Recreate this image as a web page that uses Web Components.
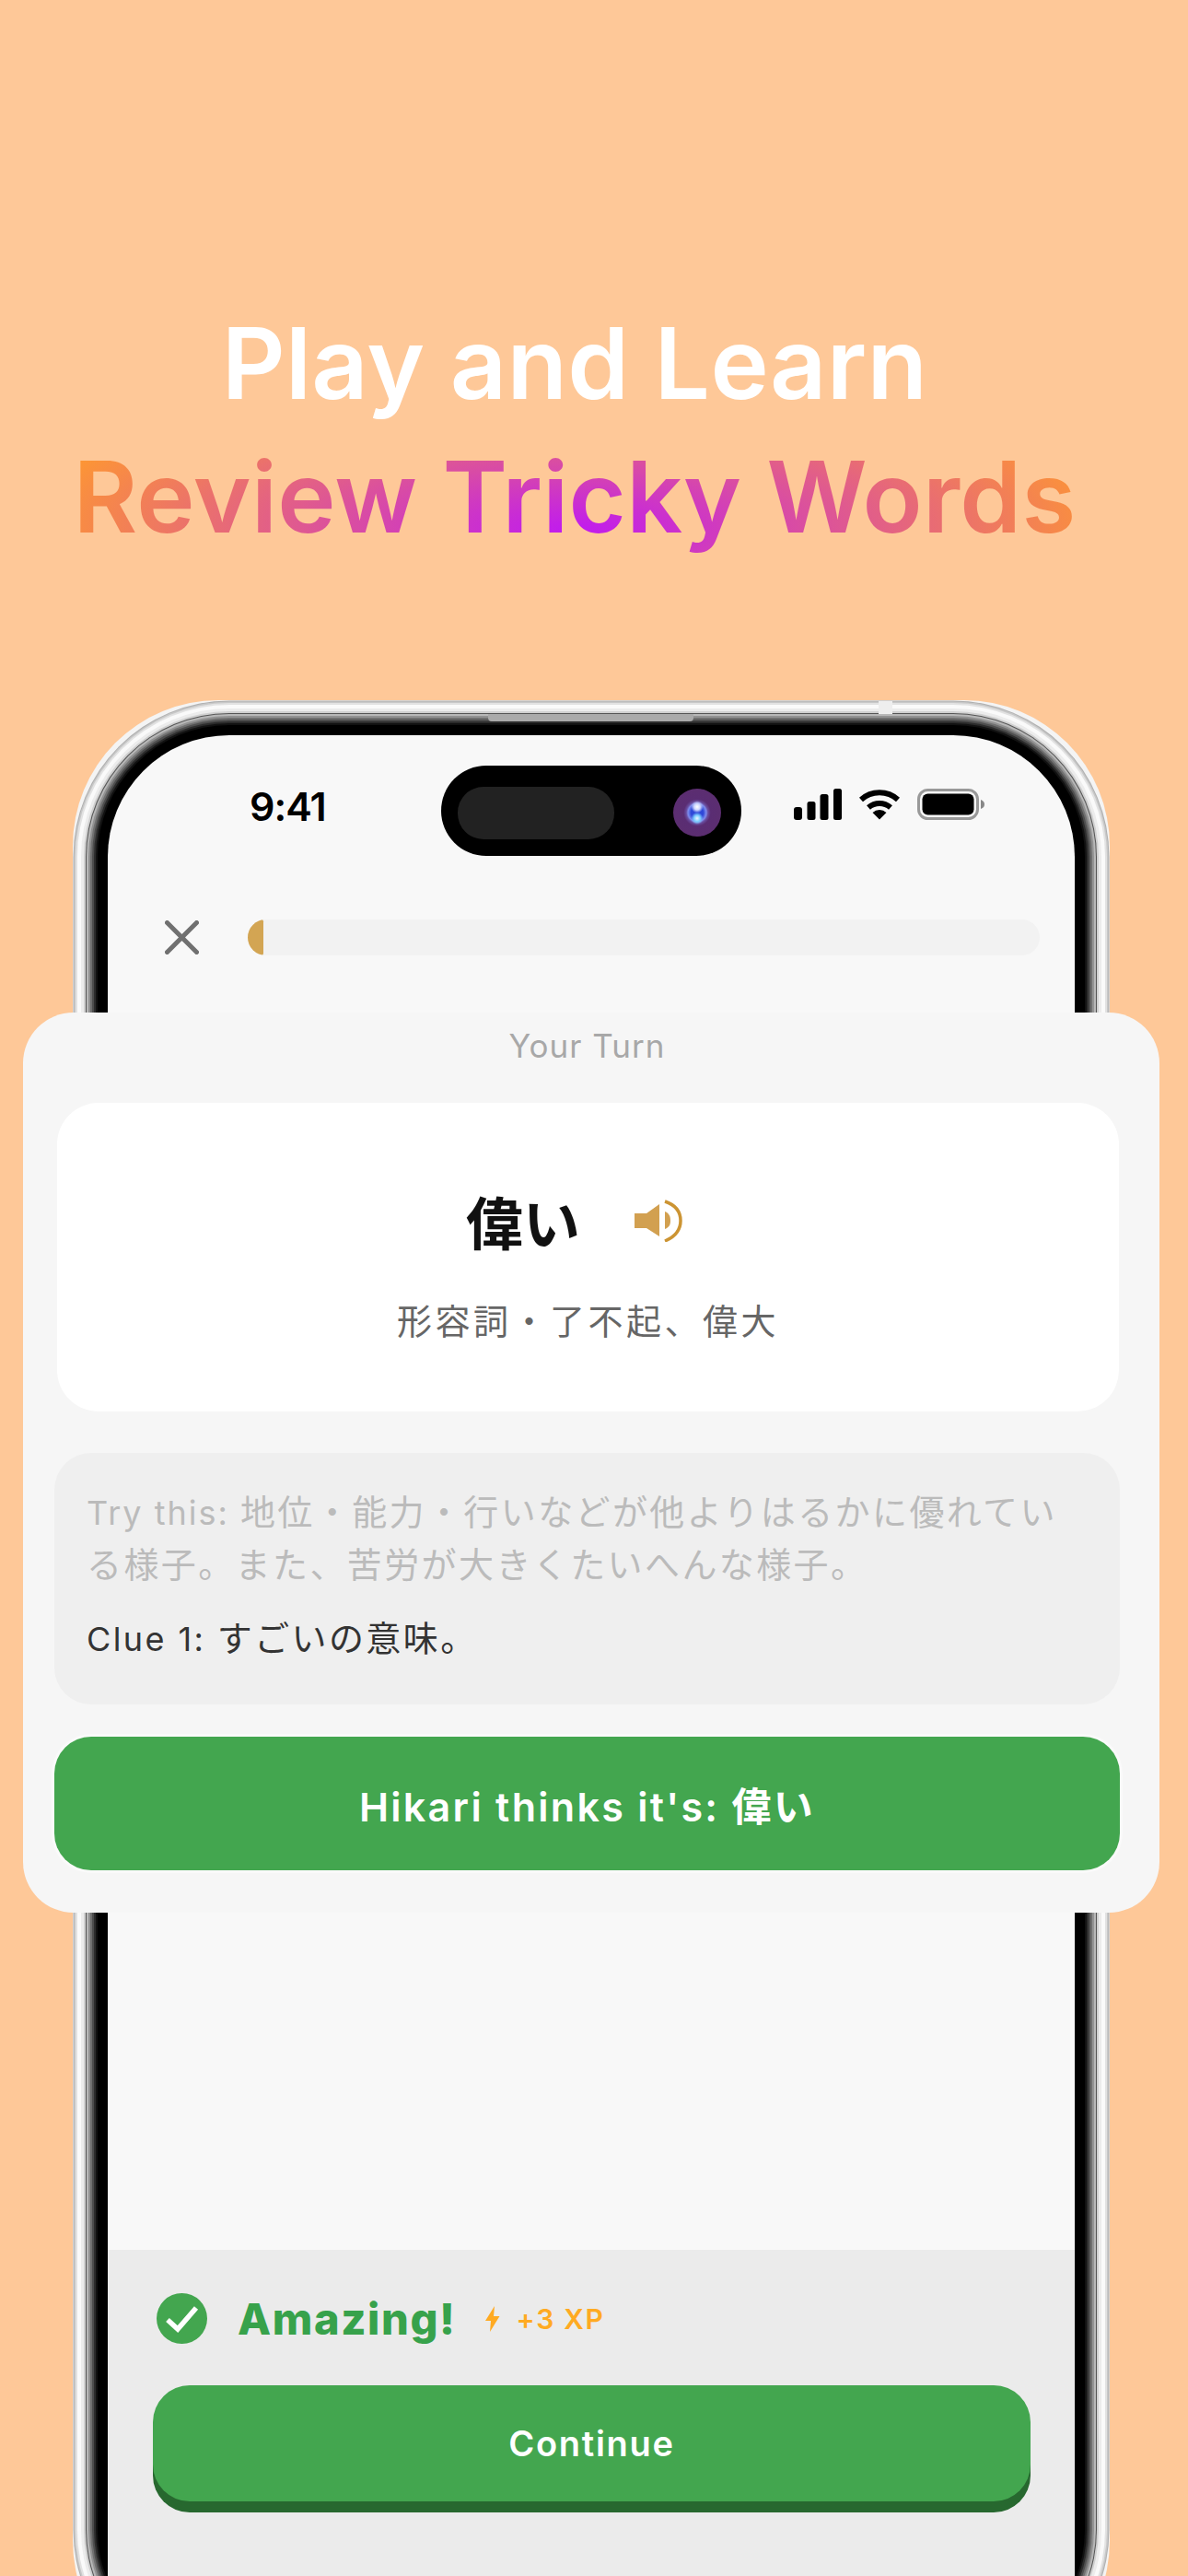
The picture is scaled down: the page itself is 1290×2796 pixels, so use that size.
<!DOCTYPE html>
<html lang="ja">
  <head>
    <meta charset="UTF-8" />
    <title>Play and Learn</title>
    <style>
      html, body { margin: 0; background: #fec898; overflow: hidden; }
    </style>
  </head>
  <body>
    <template id="store-poster">
      <style>
        :host {
          display: block; position: relative; width: 1290px; height: 2796px; overflow: hidden;
          background: #fec898; font-family: Inter, "Noto Sans CJK JP", sans-serif;
        }
      </style>
      <slot></slot>
    </template>

    <template id="promo-title">
      <style>
        :host { display: block; height: 760px; box-sizing: border-box; padding: 322px 42px 0 0; text-align: center; font-size: 107px; font-weight: 600; line-height: 145px; letter-spacing: 0.3px; }
        .plain { color: #fff; }
        .fancy {
          display: block; width: fit-content; margin: 0 auto; color: transparent;
          background: radial-gradient(ellipse 56% 130% at 50% 75%, #c01af0 0, #ff9a2e 100%);
          -webkit-background-clip: text; background-clip: text;
        }
      </style>
      <div class="plain"><slot name="plain"></slot></div>
      <div class="fancy"><slot name="fancy"></slot></div>
    </template>

    <template id="phone-frame">
      <style>
        :host { display: block; position: relative; width: 1050px; margin: 38px 0 0 117px; }
        :host::before { content: ""; position: absolute; inset: -38px; border-radius: 158px; background: #f4f4f4; }
        .screen {
          position: relative; display: flex; flex-direction: column; height: 2080px;
          background: #f8f8f8; border-radius: 132px;
          box-shadow: 0 0 0 11px #000, 0 0 0 13px #111, 0 0 0 15px #2c2c2c, 0 0 0 17px #4e4e4e, 0 0 0 19px #707070,
            0 0 0 21px #939393, 0 0 0 23px #b8b8b8, 0 0 0 24px #555, 0 0 0 26px #d0d0d0, 0 0 0 29px #ececec,
            0 0 0 33px #fafafa, 0 0 0 35px #e2e2e2, 0 0 0 36.5px #c8c8c8, 0 0 0 37.5px #b0b0b0;
        }
        .slit { position: absolute; top: -23px; left: 413px; width: 223px; height: 8px; background: #aaa; border-radius: 0 0 4px 4px; }
        .band { position: absolute; top: -37px; left: 837px; width: 15px; height: 14px; background: #eee; }
      </style>
      <div class="screen">
        <div class="slit"></div>
        <div class="band"></div>
        <slot></slot>
      </div>
    </template>

    <template id="status-bar">
      <style>
        :host { display: grid; grid-template-columns: 362px 326px 1fr; align-items: start; padding-top: 33px; height: 98px; color: #000; }
        .time { padding: 18px 0 0 154px; font-size: 43px; font-weight: 600; line-height: 52px; letter-spacing: -1px; }
        .island { position: relative; height: 98px; border-radius: 49px; background: #000; }
        .pill { position: absolute; left: 18px; top: 23px; width: 170px; height: 57px; border-radius: 28px; background: #222; }
        .lens {
          position: absolute; left: 252px; top: 25px; width: 52px; height: 52px; border-radius: 50%;
          background:
            radial-gradient(circle at 50% 38%, #fff 0, #cdd6ff 8%, transparent 16%),
            radial-gradient(circle at 50% 62%, #eef2ff 0, #7fd0ff 8%, transparent 16%),
            radial-gradient(circle, #2f48d8 0, #2f48d8 18%, #7f8cec 27%, #6a4ea0 32%, #5a2d73 40%, #5c2e70 78%, #3c2148 100%);
        }
        .icons { display: flex; align-items: flex-start; gap: 18px; padding: 25px 0 0 57px; }
        svg { display: block; }
      </style>
      <div class="time"><slot></slot></div>
      <div class="island"><div class="pill"></div><div class="lens"></div></div>
      <div class="icons">
        <svg width="52" height="34" viewBox="0 0 52 34">
          <rect x="0" y="20" width="9" height="14" rx="3" />
          <rect x="14.5" y="14" width="9" height="20" rx="2.5" />
          <rect x="28.5" y="6" width="9" height="28" rx="2.5" />
          <rect x="43" y="0" width="9" height="34" rx="2.5" />
        </svg>
        <svg width="46" height="34" viewBox="0 0 46 34">
          <path d="M3 12 A30 30 0 0 1 43 12 M11 20.5 A18.5 18.5 0 0 1 35 20.5" fill="none" stroke="#000" stroke-width="6" />
          <path d="M15.5 26 A11 11 0 0 1 30.5 26 L23 33.5 Z" />
        </svg>
        <svg width="74" height="34" viewBox="0 0 74 34">
          <rect x="1.5" y="1.5" width="64" height="31" rx="10" fill="none" stroke="#999" stroke-width="3" />
          <rect x="5.5" y="5.5" width="56" height="23" rx="6" />
          <path d="M69 12 C72 13 73 15 73 17 C73 19 72 21 69 22 Z" fill="#888" />
        </svg>
      </div>
    </template>

    <template id="lesson-progress">
      <style>
        :host { display: flex; align-items: center; gap: 53px; margin-top: 69px; padding: 0 38px 0 62px; height: 39px; }
        svg { flex: none; display: block; }
        .track { flex: 1; height: 39px; border-radius: 20px; background: #f2f2f2; overflow: hidden; }
        .fill { width: 17px; height: 100%; background: #d3a553; border-radius: 20px 3px 3px 20px; }
      </style>
      <svg width="37" height="37" viewBox="0 0 37 37">
        <path d="M2.5 2.5 L34.5 34.5 M34.5 2.5 L2.5 34.5" stroke="#707070" stroke-width="5" stroke-linecap="round" />
      </svg>
      <div class="track"><div class="fill"></div></div>
    </template>

    <template id="result-panel">
      <style>
        :host { display: block; margin-top: auto; flex: none; height: 436px; box-sizing: border-box; padding: 47px 48px 0 49px; background: #ebebeb; }
        .row { display: flex; align-items: center; height: 55px; margin-left: 4px; }
        .title { margin-left: 33px; color: #37a24b; font-size: 47px; font-weight: 800; letter-spacing: 1.6px; line-height: 55px; }
        .bolt { margin-left: 31px; display: block; }
        .xp { margin-left: 18px; color: #ffaa22; font-size: 30px; font-weight: 600; letter-spacing: 1.7px; }
      </style>
      <div class="row">
        <svg width="55" height="55" viewBox="0 0 55 55">
          <circle cx="27.5" cy="27.5" r="27.5" fill="#43a64f" />
          <path d="M12 29 L23 39 L43 16" fill="none" stroke="#fff" stroke-width="5.5" />
        </svg>
        <span class="title"><slot name="title"></slot></span>
        <svg class="bolt" width="16" height="28" viewBox="0 0 16 28">
          <path d="M10 0 L0 16 H6 L5 28 L15.5 11 H9 Z" fill="#ffaa22" />
        </svg>
        <span class="xp"><slot name="xp"></slot></span>
      </div>
      <slot></slot>
    </template>

    <template id="action-button">
      <style>
        :host {
          display: flex; align-items: center; justify-content: center; box-sizing: border-box;
          background: #43a64f; color: #fff; font-weight: 600; border-radius: 40px;
        }
        :host([raised]) { height: 126px; margin-top: 45px; font-size: 38px; letter-spacing: 1.7px; box-shadow: 0 12px 0 #27682f; }
        :host([flat]) { height: 145px; margin-top: 35px; font-size: 43px; letter-spacing: 2.3px; box-shadow: 0 0 0 3px #fafafa; }
      </style>
      <slot></slot>
    </template>

    <template id="quiz-card">
      <style>
        :host {
          display: block; position: absolute; left: 25px; top: 1099px; width: 1234px; height: 977px; box-sizing: border-box;
          padding: 16px 43px 0 34px; border-radius: 55px; background: #f6f6f6;
        }
        .label { height: 40px; margin-bottom: 42px; text-align: center; color: #a8a8a8; font-size: 35px; line-height: 40px; letter-spacing: 1px; }
      </style>
      <div class="label"><slot name="label"></slot></div>
      <slot></slot>
    </template>

    <template id="word-card">
      <style>
        :host {
          display: flex; flex-direction: column; align-items: center; height: 335px; box-sizing: border-box;
          margin: 0 1px 0 3px; padding-top: 92px; border-radius: 45px; background: #fff;
        }
        .word { display: flex; align-items: center; gap: 59px; height: 72px; padding-right: 30px; color: #111; font-size: 62px; font-weight: 700; }
        .sub { margin-top: 48px; color: #666; font-size: 38px; line-height: 50px; letter-spacing: 3.5px; }
        svg { display: block; }
      </style>
      <div class="word">
        <span><slot name="word"></slot></span>
        <svg width="52" height="46" viewBox="0 0 52 46">
          <path d="M0 15 H13 L27 5 V40 L13 31 H0 Z" fill="#d2a050" />
          <path d="M33 13 C38 15 39 19 39 23 C39 27 38 30 33 32 Z" fill="#d2a050" />
          <path d="M33 2 C45 6 50 14 50 23 C50 32 45 40 33 45" fill="none" stroke="#cc9433" stroke-width="3.5" />
        </svg>
      </div>
      <div class="sub"><slot name="sub"></slot></div>
    </template>

    <template id="hint-box">
      <style>
        :host {
          display: block; height: 273px; box-sizing: border-box; margin-top: 45px; padding: 36px 30px 0 35px;
          border-radius: 40px; background: #efefef; font-size: 38px; line-height: 56px; letter-spacing: 2.4px;
        }
        .latin { font-size: 36px; }
        .try { color: #bbb; white-space: nowrap; }
        .try .latin { letter-spacing: 2px; }
        .clue { margin-top: 24px; color: #333; }
      </style>
      <div class="try"><span class="latin"><slot name="try-label"></slot></span><slot name="try"></slot></div>
      <div class="try"><slot name="try-more"></slot></div>
      <div class="clue"><span class="latin"><slot name="clue-label"></slot></span><slot name="clue"></slot></div>
    </template>

    <store-poster>
      <promo-title>
        <span slot="plain">Play and Learn</span>
        <span slot="fancy">Review Tricky Words</span>
      </promo-title>
      <phone-frame>
        <status-bar>9:41</status-bar>
        <lesson-progress></lesson-progress>
        <result-panel>
          <span slot="title">Amazing!</span>
          <span slot="xp">+3 XP</span>
          <action-button raised>Continue</action-button>
        </result-panel>
      </phone-frame>
      <quiz-card>
        <span slot="label">Your Turn</span>
        <word-card>
          <span slot="word">偉い</span>
          <span slot="sub">形容詞・了不起、偉大</span>
        </word-card>
        <hint-box>
          <span slot="try-label">Try this: </span>
          <span slot="try">地位・能力・行いなどが他よりはるかに優れてい</span>
          <span slot="try-more">る様子。また、苦労が大きくたいへんな様子。</span>
          <span slot="clue-label">Clue 1: </span>
          <span slot="clue">すごいの意味。</span>
        </hint-box>
        <action-button flat>Hikari thinks it's: 偉い</action-button>
      </quiz-card>
    </store-poster>

    <script>
      // every template with an id becomes a custom element of that name
      document.querySelectorAll('template[id]').forEach((template) => {
        customElements.define(
          template.id,
          class extends HTMLElement {
            constructor() {
              super();
              this.attachShadow({ mode: 'open' });
              this.shadowRoot.appendChild(template.content.cloneNode(true));
            }
          }
        );
      });
    </script>
  </body>
</html>
